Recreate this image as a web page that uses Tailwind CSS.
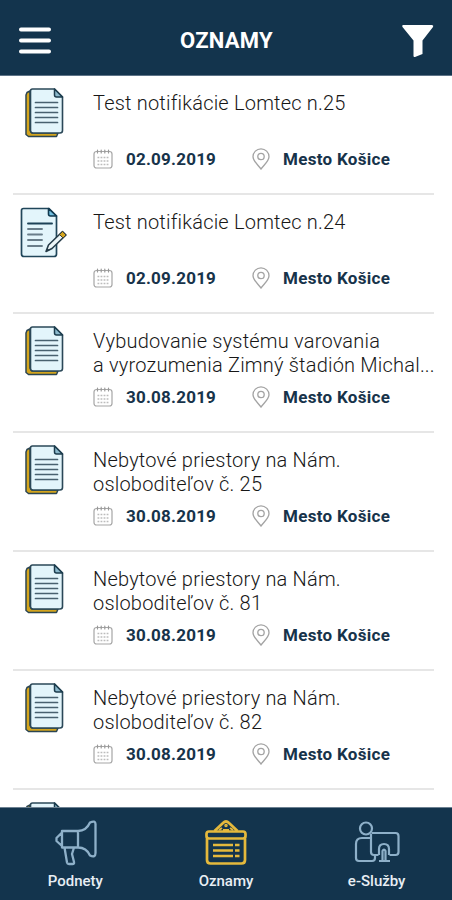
<!DOCTYPE html>
<html lang="sk">
<head>
<meta charset="utf-8">
<title>Oznamy</title>
<script src="https://cdn.jsdelivr.net/npm/@tailwindcss/browser@4"></script>
</head>
<body class="h-[900px] w-[452px] overflow-hidden bg-white font-[Roboto,sans-serif]">
<svg class="hidden">
  <symbol id="docs" viewBox="0 0 40 52">
    <path d="M3 5.500 6 4v39l2 3h26l-1.500 3.500H4.500L2 47.500V8z" fill="#d4a51d" stroke="#2b4552" stroke-width="1.500" stroke-linejoin="round"/>
    <path d="M8.500 2H30.500L38.500 10V43.500Q38.500 46 36 46H9Q6.500 46 6.500 43.500V4Q6.500 2 8.500 2z" fill="#e3f5fb" stroke="#2b4858" stroke-width="1.600"/>
    <path d="M30.500 2v6q0 2 2 2h6z" fill="#8bb9cc" stroke="#1c3c4d" stroke-width="1.500" stroke-linejoin="round"/>
    <path d="M11.500 15.500h22M11.500 20.500h22M11.500 25.500h22M11.500 30.500h22M11.500 35.500h22" stroke="#48616f" stroke-width="1.700" stroke-linecap="round"/>
  </symbol>
  <symbol id="edit" viewBox="0 0 48 52">
    <path d="M3.500 1.500H29L36.500 9V47Q36.500 49.500 34 49.500H4Q1.500 49.500 1.500 47V3.500Q1.500 1.500 3.500 1.500z" fill="#e3f5fb" stroke="#20465a" stroke-width="1.700"/>
    <path d="M28.500 1.500V7q0 2 2 2h6z" fill="#72bfe0" stroke="#123a50" stroke-width="1.600" stroke-linejoin="round"/>
    <path d="M8 16.500h24" stroke="#1d4257" stroke-width="1.900" stroke-linecap="round"/>
    <path d="M8 22h14M8 27.500h14M8 33h14M8 39h14" stroke="#697d89" stroke-width="1.900" stroke-linecap="round"/>
    <path d="M26 44.500 28.500 38 42.500 24.500 46 28 32 41.500z" fill="#edf6f8" stroke="#263c49" stroke-width="1.600" stroke-linejoin="round"/>
    <path d="m39.500 27.500 3-3 3.500 3.500-3 3z" fill="#d5a51e" stroke="#3c4036" stroke-width="1"/>
    <path d="m26 44.500 1.300-3.500 2.200 2.200z" fill="#263c49"/>
  </symbol>
  <symbol id="cal" viewBox="0 0 20 20">
    <rect x="1" y="2.500" width="18" height="16.500" rx="2.500" fill="none" stroke="#a6a6a6" stroke-width="1.200"/>
    <path d="M4.500 1v3M8.200 1v3M11.800 1v3M15.500 1v3" stroke="#999" stroke-width="1.200" stroke-linecap="round"/>
    <path d="M4.500 8.500h11M4.500 12h11M4.500 15.500h11" stroke="#bcbcbc" stroke-width="1.500" stroke-dasharray="1.800 1.250"/>
  </symbol>
  <symbol id="pin" viewBox="0 0 18 22">
    <path d="M9 21C5.500 16.500 1 13 1 8.800A8 8 0 0 1 17 8.800C17 13 12.500 16.500 9 21z" fill="none" stroke="#a3a3a3" stroke-width="1.300"/>
    <circle cx="9" cy="8.500" r="3.200" fill="none" stroke="#a3a3a3" stroke-width="1.300"/>
  </symbol>
</svg>

<div class="flex h-full flex-col">
  <header class="flex h-[76px] shrink-0 items-center justify-between border-b border-[#5d7387] bg-[#13344d] pt-[6px] pr-[18px] pl-[18px]">
    <svg class="h-[30px] w-[34px]" viewBox="0 0 34 30" stroke="#fff" stroke-width="4" stroke-linecap="round"><path d="M3 3.500h28M3 14.500h28M3 25.500h28"/></svg>
    <h1 class="text-[22px] font-bold tracking-[0.25px] text-white">OZNAMY</h1>
    <svg class="h-[34px] w-[33px]" viewBox="0 0 33 34"><path d="M2 1H31Q33 1.500 32 3L21.500 16.500V30L14 33Q12.500 33.300 12.500 32V16.500L1.500 3Q0.500 1.300 2 1z" fill="#fff"/></svg>
  </header>

  <main id="list" class="min-h-0 flex-1 overflow-hidden pr-[18px] pl-[13px]"></main>

  <footer class="grid h-[93px] shrink-0 grid-cols-3 border-t border-[#6d8191] bg-[#13344d] text-[15px] font-medium text-[#e8eef4]">
    <div class="flex flex-col items-center pt-[12px]">
      <svg class="ml-[2px] h-[46px] w-[44px]" viewBox="0 0 44 46" fill="none" stroke="#8eb0c9" stroke-width="2.300" stroke-linejoin="round"><path d="M8 11H24C30 11 34 7 36 2.500Q41.500 0 41.500 4V33Q41.500 38 36 35.500C34 31 30 27.500 24 27.500H8zM24 11v16.500M8 12.500 2.500 18v3L8 26M10.500 27.500 13 42.500Q13.300 44 15 44H18.500Q20.500 44 20 42L18 34 20 27.500"/></svg>
      <span class="mt-[4px] leading-[22px]">Podnety</span>
    </div>
    <div class="flex flex-col items-center pt-[12px]">
      <svg class="h-[46px] w-[44px]" viewBox="0 0 44 46" fill="none" stroke="#e5b93c" stroke-width="2.700" stroke-linejoin="round"><path d="M10.500 11 19 3Q22 0 25 3L33.500 11"/><circle cx="22" cy="5.500" r="1" stroke-width="1.500"/><path d="M15 10 18 8M29 10 26 8M19 10h6" stroke-width="2"/><rect x="2.500" y="11.500" width="39" height="7" rx="2.500"/><path d="M3 18.500V40Q3 43.500 6.500 43.500H37.500Q41 43.500 41 40V18.500"/><path d="M9 25h20M9 30.500h20M9 36h20M31 25h4.500M31 30.500h4.500M31 36h4.500"/></svg>
      <span class="mt-[4px] leading-[22px]">Oznamy</span>
    </div>
    <div class="flex flex-col items-center pt-[12px]">
      <svg class="h-[46px] w-[46px]" viewBox="0 0 46 46" fill="none" stroke="#8eb0c9" stroke-width="2.200" stroke-linejoin="round"><circle cx="12" cy="8.500" r="6"/><path d="M17.500 13H41.500Q44.500 13 44.500 16V32Q44.500 35 41.500 35H35.500M17 14V32Q17 35 20 35H24.500M17 18H8Q2 18 2 24V38Q2 41 5 41H18Q21 41 21 38V35M25 35V29Q25 24 30 24T35 29V35M25 41h11M28.500 40V31Q30 28 31.500 31V40"/></svg>
      <span class="mt-[4px] leading-[22px]">e-Služby</span>
    </div>
  </footer>
</div>

<template id="row">
  <article class="flex h-[119px] border-b-2 border-[#e6e6e6]">
    <div class="w-[80px] shrink-0 pt-[11px]"><svg><use/></svg></div>
    <div class="min-w-0 flex-1 pt-[15px]">
      <h2 class="h-[48px] text-[20px] leading-[24px] font-light tracking-[0.2px] whitespace-nowrap text-[#171717]"></h2>
      <div class="meta mt-[8px] flex h-[24px] items-center text-[17px] font-bold text-[#17334a]">
        <svg class="h-[20px] w-[20px]"><use href="#cal"/></svg>
        <time class="ml-[13px] w-[126px] pt-[2px] tracking-[0.22px]"></time>
        <svg class="h-[22px] w-[18px]"><use href="#pin"/></svg>
        <span class="ml-[13px] pt-[2px] tracking-[0.3px]">Mesto Košice</span>
      </div>
    </div>
  </article>
</template>
<script>
const items = [
  [["Test notifikácie Lomtec n.25"], "02.09.2019", "docs"],
  [["Test notifikácie Lomtec n.24"], "02.09.2019", "edit"],
  [["Vybudovanie systému varovania", "a vyrozumenia Zimný štadión Michal..."], "30.08.2019", "docs"],
  [["Nebytové priestory na Nám.", "osloboditeľov č. 25"], "30.08.2019", "docs"],
  [["Nebytové priestory na Nám.", "osloboditeľov č. 81"], "30.08.2019", "docs"],
  [["Nebytové priestory na Nám.", "osloboditeľov č. 82"], "30.08.2019", "docs"],
  [[], "", "docs"]
];
const tpl = document.getElementById("row");
for (const [lines, date, icon] of items) {
  const n = tpl.content.cloneNode(true);
  const svg = n.querySelector("svg");
  svg.setAttribute("class", icon === "edit" ? "ml-[7px] mt-[1px] h-[52px] w-[48px]" : "ml-[11px] h-[52px] w-[40px]");
  svg.firstElementChild.setAttribute("href", "#" + icon);
  const h = n.querySelector("h2");
  lines.forEach(l => { const s = document.createElement("span"); s.className = "block"; s.textContent = l; h.append(s); });
  if (date) n.querySelector("time").textContent = date;
  else n.querySelector(".meta").remove();
  document.getElementById("list").append(n);
}
</script>
</body>
</html>
